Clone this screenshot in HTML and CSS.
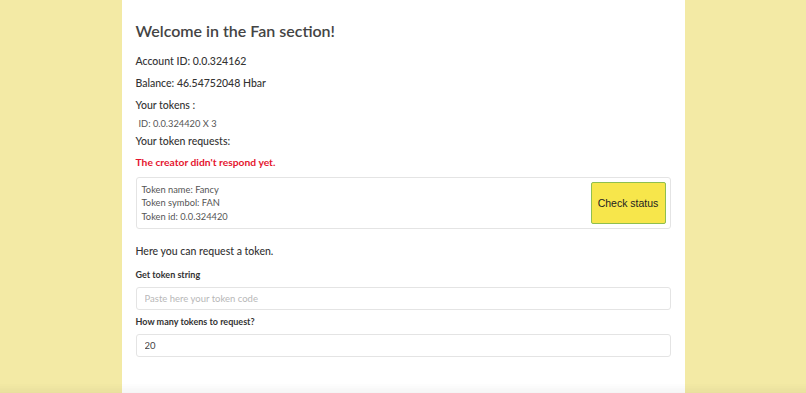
FILE: index.html
```html
<!DOCTYPE html>
<html lang="en">
<head>
    <meta charset="UTF-8">
    <meta name="viewport" content="width=device-width, initial-scale=1.0">
    <title>Fan section</title>
    <link rel="stylesheet" href="styles.css">
</head>
<body>
    <div class="container">
        <h1>Welcome in the Fan section!</h1>
        <p class="info">Account ID: 0.0.324162</p>
        <p class="info">Balance: 46.54752048 Hbar</p>
        <p class="info tokens-title">Your tokens :</p>
        <p class="token-line">ID: 0.0.324420 X 3</p>
        <p class="info requests-title">Your token requests:</p>
        <p class="warning">The creator didn't respond yet.</p>

        <div class="request-card">
            <div class="request-details">
                <span>Token name: Fancy</span>
                <span>Token symbol: FAN</span>
                <span>Token id: 0.0.324420</span>
            </div>
            <button class="status-btn">Check status</button>
        </div>

        <p class="intro">Here you can request a token.</p>

        <form class="request-form">
            <div class="form-group">
                <label for="token-string">Get token string</label>
                <input type="text" id="token-string" placeholder="Paste here your token code">
            </div>
            <div class="form-group">
                <label for="amount">How many tokens to request?</label>
                <input type="number" id="amount" value="20">
            </div>
        </form>
    </div>
</body>
</html>
```

FILE: styles.css
```css
body {
    font-family: 'Lato', sans-serif;
    margin: 0;
    padding: 0;
    background: #f3eaa5;
    color: #333;
    height: 393px;
    overflow: hidden;
}

/* soft shade along the bottom edge of the window */
body::after {
    content: "";
    position: fixed;
    left: 0;
    right: 0;
    bottom: 0;
    height: 10px;
    background: linear-gradient(rgba(0, 0, 0, 0), rgba(0, 0, 0, 0.04));
}

.container {
    background: #fff;
    width: 563px;
    min-height: 393px;
    margin: 0 auto;
    padding: 20px 14px 0;
    box-sizing: border-box;
}

h1 {
    font-size: 16px;
    font-weight: 600;
    color: #444;
    line-height: 22px;
    margin: 0 0 12px;
}

p {
    margin: 0;
}

.info {
    font-size: 10.5px;
    font-weight: 500;
    color: #333;
    margin-bottom: 8px;
    line-height: 14px;
}

.tokens-title {
    margin-bottom: 5px;
}

.token-line {
    font-size: 9.3px;
    color: #555;
    padding-left: 3px;
    line-height: 14px;
    margin-bottom: 3px;
}

.requests-title {
    margin-bottom: 7px;
}

.warning {
    font-size: 10.3px;
    font-weight: 700;
    color: #e5152f;
    line-height: 14px;
    margin-bottom: 8px;
}

.request-card {
    display: flex;
    justify-content: space-between;
    align-items: center;
    border: 1px solid #e4e4e4;
    border-radius: 3px;
    padding: 4px 4px 4px 5px;
    height: 52px;
    box-sizing: border-box;
}

.request-details {
    display: flex;
    flex-direction: column;
    font-size: 9.3px;
    line-height: 13.5px;
    color: #555;
}

.status-btn {
    font-family: 'Liberation Sans', Arial, sans-serif;
    font-size: 10.5px;
    color: #222;
    background: #f7e64b;
    border: 1px solid #8fbf4f;
    border-radius: 2px;
    width: 75px;
    height: 42px;
    padding: 0;
}

.intro {
    font-size: 10.5px;
    font-weight: 500;
    color: #333;
    line-height: 14px;
    margin: 15px 0 11px;
}

.form-group {
    margin-bottom: 6px;
}

label {
    display: block;
    font-size: 9px;
    font-weight: 700;
    color: #333;
    line-height: 12px;
    margin-bottom: 6px;
}

input {
    display: block;
    width: 100%;
    height: 23px;
    box-sizing: border-box;
    border: 1px solid #e4e4e4;
    border-radius: 3px;
    padding: 0 8px;
    font-family: inherit;
    font-size: 9.5px;
    color: #444;
}

input::placeholder {
    color: #b8b8b8;
}
```
